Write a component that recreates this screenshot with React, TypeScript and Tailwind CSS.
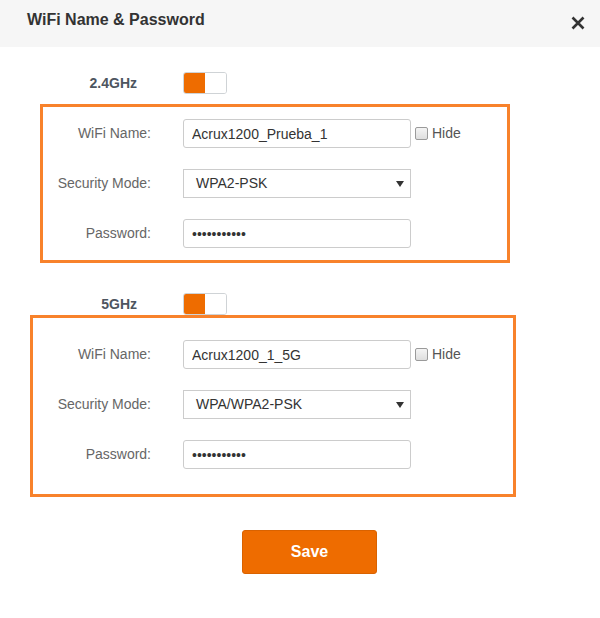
import React from "react";

const FONT = { fontFamily: '"Liberation Sans", Arial, sans-serif' };

function Toggle() {
  return (
    <div className="flex h-[22px] w-[44px] overflow-hidden rounded-[3px] border border-[#cfd3d6] bg-white">
      <div className="h-full w-[21px] bg-[#ee6c00]" />
      <div className="h-full flex-1 bg-white" />
    </div>
  );
}

function Field({ label, labelW, children }: { label: string; labelW: string; children: React.ReactNode }) {
  return (
    <div className="flex h-[29px] items-center">
      <div className={`${labelW} shrink-0 text-right text-[14px] text-[#666]`}>{label}</div>
      <div className="ml-[32px] flex items-center">{children}</div>
    </div>
  );
}

function TextInput({ value, type = "text" }: { value: string; type?: string }) {
  return (
    <input
      readOnly
      type={type}
      value={value}
      className="h-[29px] w-[228px] rounded-[3px] border border-[#ccc] bg-white px-[8px] text-[14px] text-[#333] outline-none"
      style={FONT}
    />
  );
}

function Select({ value }: { value: string }) {
  return (
    <div className="flex h-[29px] w-[228px] items-center justify-between border border-[#ccc] bg-white pl-[12px] pr-[5px] text-[14px] text-[#333]">
      <span>{value}</span>
      <svg width="8" height="6" viewBox="0 0 8 6" className="mr-[1px]">
        <path d="M0 0 L8 0 L4 6 Z" fill="#333" />
      </svg>
    </div>
  );
}

function Hide() {
  return (
    <div className="ml-[4px] flex items-center self-start pt-[4px]">
      <div className="h-[13px] w-[13px] rounded-[2px] border border-[#9a9a9a] bg-gradient-to-b from-[#f4f4f4] to-[#dedede]" />
      <span className="ml-[4px] text-[14px] text-[#555]">Hide</span>
    </div>
  );
}

function BandBox({
  boxClass,
  labelW,
  name,
  mode,
}: {
  boxClass: string;
  labelW: string;
  name: string;
  mode: string;
}) {
  return (
    <div className={`${boxClass} flex flex-col gap-[21px] border-[3px] border-[#f8822b]`}>
      <div className="flex">
        <Field label="WiFi Name:" labelW={labelW}>
          <TextInput value={name} />
        </Field>
        <Hide />
      </div>
      <Field label="Security Mode:" labelW={labelW}>
        <Select value={mode} />
      </Field>
      <Field label="Password:" labelW={labelW}>
        <TextInput type="password" value="12345678901" />
      </Field>
    </div>
  );
}

export default function App() {
  return (
    <div className="h-[618px] w-[600px] bg-white" style={FONT}>
      <div className="flex h-[47px] items-start justify-between bg-[#f6f6f6] pl-[27px] pr-[15px] pt-[10px]">
        <h1 className="text-[16px] font-bold leading-[20px] text-[#333]">WiFi Name &amp; Password</h1>
        <svg width="14" height="14" viewBox="0 0 14 14" className="mt-[6px]">
          <path d="M1.5 1.5 L12.5 12.5 M12.5 1.5 L1.5 12.5" stroke="#333" strokeWidth="2.6" strokeLinecap="butt" />
        </svg>
      </div>

      <div className="mt-[25px] flex items-center">
        <div className="w-[137px] text-right text-[14px] font-bold text-[#4d5560]">2.4GHz</div>
        <div className="ml-[46px]">
          <Toggle />
        </div>
      </div>

      <BandBox
        boxClass="ml-[40px] mt-[10px] w-[470px] pt-[12px] pb-[12px]"
        labelW="w-[108px]"
        name="Acrux1200_Prueba_1"
        mode="WPA2-PSK"
      />

      <div className="mt-[30px] flex items-center">
        <div className="w-[137px] text-right text-[14px] font-bold text-[#4d5560]">5GHz</div>
        <div className="ml-[46px]">
          <Toggle />
        </div>
      </div>

      <BandBox
        boxClass="ml-[30px] mt-0 w-[486px] pt-[22px] pb-[25px]"
        labelW="w-[118px]"
        name="Acrux1200_1_5G"
        mode="WPA/WPA2-PSK"
      />

      <div className="mt-[33px] flex">
        <button className="ml-[242px] h-[44px] w-[135px] rounded-[3px] border border-[#d96200] bg-[#ee6c00] text-[16px] font-bold text-white">
          Save
        </button>
      </div>
    </div>
  );
}
